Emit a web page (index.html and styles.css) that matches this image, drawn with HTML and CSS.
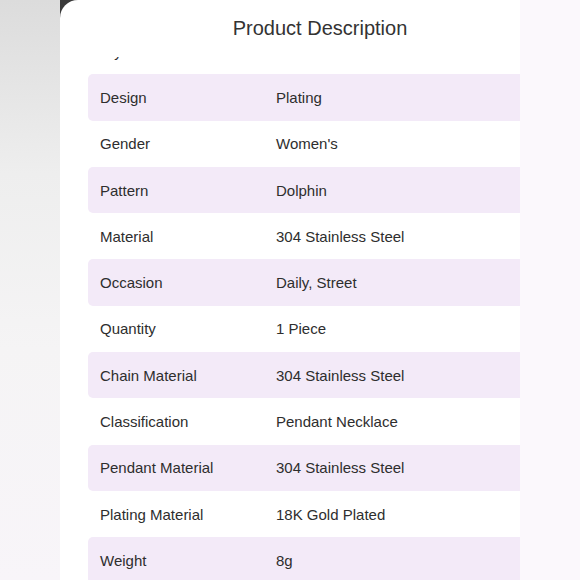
FILE: index.html
```html
<!DOCTYPE html>
<html>
<head>
<meta charset="utf-8">
<link rel="stylesheet" href="styles.css">
</head>
<body>
<div class="page">
  <div class="side-left"></div>
  <div class="frame">
    <div class="card">
      <div class="header"><h1 class="title">Product Description</h1></div>
      <div class="viewport">
        <div class="rows">
          <div class="row"><span class="label">Style</span><span class="value">Fashion</span></div>
          <div class="row alt"><span class="label">Design</span><span class="value">Plating</span></div>
          <div class="row"><span class="label">Gender</span><span class="value">Women's</span></div>
          <div class="row alt"><span class="label">Pattern</span><span class="value">Dolphin</span></div>
          <div class="row"><span class="label">Material</span><span class="value">304 Stainless Steel</span></div>
          <div class="row alt"><span class="label">Occasion</span><span class="value">Daily, Street</span></div>
          <div class="row"><span class="label">Quantity</span><span class="value">1 Piece</span></div>
          <div class="row alt"><span class="label">Chain Material</span><span class="value">304 Stainless Steel</span></div>
          <div class="row"><span class="label">Classification</span><span class="value">Pendant Necklace</span></div>
          <div class="row alt"><span class="label">Pendant Material</span><span class="value">304 Stainless Steel</span></div>
          <div class="row"><span class="label">Plating Material</span><span class="value">18K Gold Plated</span></div>
          <div class="row alt"><span class="label">Weight</span><span class="value">8g</span></div>
        </div>
      </div>
    </div>
  </div>
</div>
</body>
</html>
```
FILE: styles.css
```css
html, body {
  margin: 0;
  padding: 0;
  height: 100%;
}
body {
  font-family: "Liberation Sans", Arial, sans-serif;
  color: #333;
  overflow: hidden;
}
.page {
  display: flex;
  width: 580px;
  height: 580px;
}
.side-left {
  width: 60px;
  flex: none;
  background: linear-gradient(to bottom, #dcdcdc 0%, #eeeeee 30%, #f5f4f5 60%, #f8f5f9 100%);
}
.frame {
  flex: 1;
  background: #3a3a3a;
  display: flex;
}
.card {
  flex: 1;
  border-top-left-radius: 18px;
  background: linear-gradient(to right, #ffffff 460px, #fbf8fc 460px);
  display: flex;
  flex-direction: column;
  overflow: hidden;
}
.header {
  height: 57px;
  flex: none;
  display: flex;
  justify-content: center;
}
.title {
  margin: 17px 0 0;
  font-size: 20px;
  font-weight: normal;
  line-height: 23px;
  color: #333;
}
.viewport {
  flex: 1;
  overflow: hidden;
  padding-left: 28px;
}
.rows {
  margin-top: -29px;
  width: 432px;
}
.row {
  height: 46.3px;
  display: flex;
  align-items: center;
  font-size: 15px;
  color: #2e2e2e;
  border-radius: 5px 0 0 5px;
}
.row.alt {
  background: #f3eaf8;
}
.label {
  width: 188px;
  padding-left: 12px;
  box-sizing: border-box;
  flex: none;
}
.value {
  flex: 1;
}
```
